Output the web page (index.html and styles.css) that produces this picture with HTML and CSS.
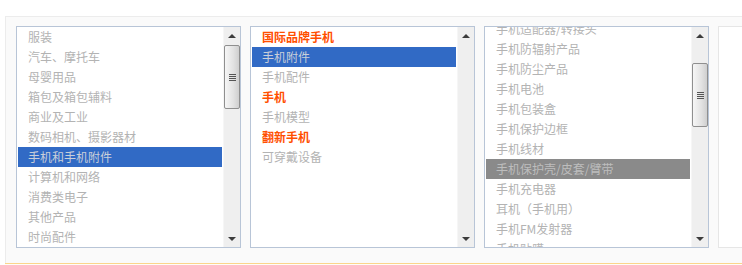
FILE: index.html
```html
<!DOCTYPE html>
<html lang="zh-CN">
<head>
  <meta charset="UTF-8" />
  <meta name="viewport" content="width=device-width, initial-scale=1.0" />
  <title>类目选择</title>
  <link rel="stylesheet" href="styles.css">
</head>
<body>
  <div class="cat-panel">
    <div class="cat-box">
      <div class="cat-view">
        <ul class="cat-list">
          <li>服装</li>
          <li>汽车、摩托车</li>
          <li>母婴用品</li>
          <li>箱包及箱包辅料</li>
          <li>商业及工业</li>
          <li>数码相机、摄影器材</li>
          <li class="active">手机和手机附件</li>
          <li>计算机和网络</li>
          <li>消费类电子</li>
          <li>其他产品</li>
          <li>时尚配件</li>
        </ul>
      </div>
      <div class="scrollbar">
        <span class="arrow up"></span>
        <div class="track">
          <div class="thumb" style="margin-top: 1px"><i></i><i></i><i></i><i></i></div>
        </div>
        <span class="arrow down"></span>
      </div>
    </div>

    <div class="cat-box">
      <div class="cat-view">
        <ul class="cat-list">
          <li class="hot">国际品牌手机</li>
          <li class="active">手机附件</li>
          <li>手机配件</li>
          <li class="hot">手机</li>
          <li>手机模型</li>
          <li class="hot">翻新手机</li>
          <li>可穿戴设备</li>
        </ul>
      </div>
      <div class="scrollbar">
        <span class="arrow up"></span>
        <div class="track"></div>
        <span class="arrow down"></span>
      </div>
    </div>

    <div class="cat-box">
      <div class="cat-view">
        <ul class="cat-list scrolled">
          <li>手机适配器/转接头</li>
          <li>手机防辐射产品</li>
          <li>手机防尘产品</li>
          <li>手机电池</li>
          <li>手机包装盒</li>
          <li>手机保护边框</li>
          <li>手机线材</li>
          <li class="current">手机保护壳/皮套/臂带</li>
          <li>手机充电器</li>
          <li>耳机（手机用）</li>
          <li>手机FM发射器</li>
          <li>手机贴膜</li>
        </ul>
      </div>
      <div class="scrollbar">
        <span class="arrow up"></span>
        <div class="track">
          <div class="thumb" style="margin-top: 19px"><i></i><i></i><i></i><i></i></div>
        </div>
        <span class="arrow down"></span>
      </div>
    </div>

    <div class="cat-box empty"></div>
  </div>
  <div class="cat-footer"></div>
</body>
</html>
```

FILE: styles.css
```css
body {
  margin: 0;
  background: #fff;
  font-family: "Noto Sans CJK SC", "Liberation Sans", sans-serif;
  font-size: 12px;
  overflow: hidden;
}
.cat-panel {
  display: flex;
  gap: 9px;
  margin: 16px 0 0 5px;
  padding: 9px 0 15px 10px;
  background: #fafafa;
  border-top: 1px solid #ececec;
  border-left: 1px solid #ececec;
  overflow: hidden;
}
.cat-box {
  flex: 0 0 auto;
  display: flex;
  width: 223px;
  height: 220px;
  border: 1px solid #b8c5d7;
  background: #fff;
}
.cat-box.empty {
  width: 260px;
  border-color: #e6e6e6;
}
.cat-view {
  width: 206px;
  overflow: hidden;
}
.cat-list {
  list-style: none;
  margin: 0;
  padding: 0 1px;
}
.cat-list.scrolled {
  margin-top: -8px;
}
.cat-list li {
  height: 20px;
  line-height: 20px;
  padding-left: 10px;
  color: #b3b3b3;
  white-space: nowrap;
}
.cat-list li.hot {
  color: #ff4f00;
  font-weight: bold;
}
.cat-list li.active {
  background: #316ac5;
  color: #c9cfd9;
}
.cat-list li.current {
  background: #8a8a8a;
  color: #bdbdbd;
}
.scrollbar {
  width: 17px;
  display: flex;
  flex-direction: column;
  background: #efefef;
  border-left: 1px solid #f6f6f6;
  box-sizing: border-box;
}
.arrow {
  height: 17px;
  display: flex;
  align-items: center;
  justify-content: center;
}
.arrow::before {
  content: "";
  width: 0;
  height: 0;
  border-left: 4px solid transparent;
  border-right: 4px solid transparent;
}
.arrow.up::before {
  border-bottom: 4px solid #3c3c3c;
}
.arrow.down::before {
  border-top: 4px solid #3c3c3c;
}
.track {
  flex: 1;
}
.thumb {
  height: 62px;
  border: 1px solid #8f8f8f;
  border-radius: 2px;
  background: linear-gradient(to right, #f6f6f6, #e2e2e2 60%, #cfcfcf);
  display: flex;
  flex-direction: column;
  align-items: center;
  justify-content: center;
  gap: 1px;
}
.thumb i {
  display: block;
  width: 7px;
  height: 1px;
  background: #555;
}
.cat-footer {
  margin-left: 5px;
  height: 3px;
  border-top: 1px solid #fbd58b;
  background: #fffdf6;
}
```
